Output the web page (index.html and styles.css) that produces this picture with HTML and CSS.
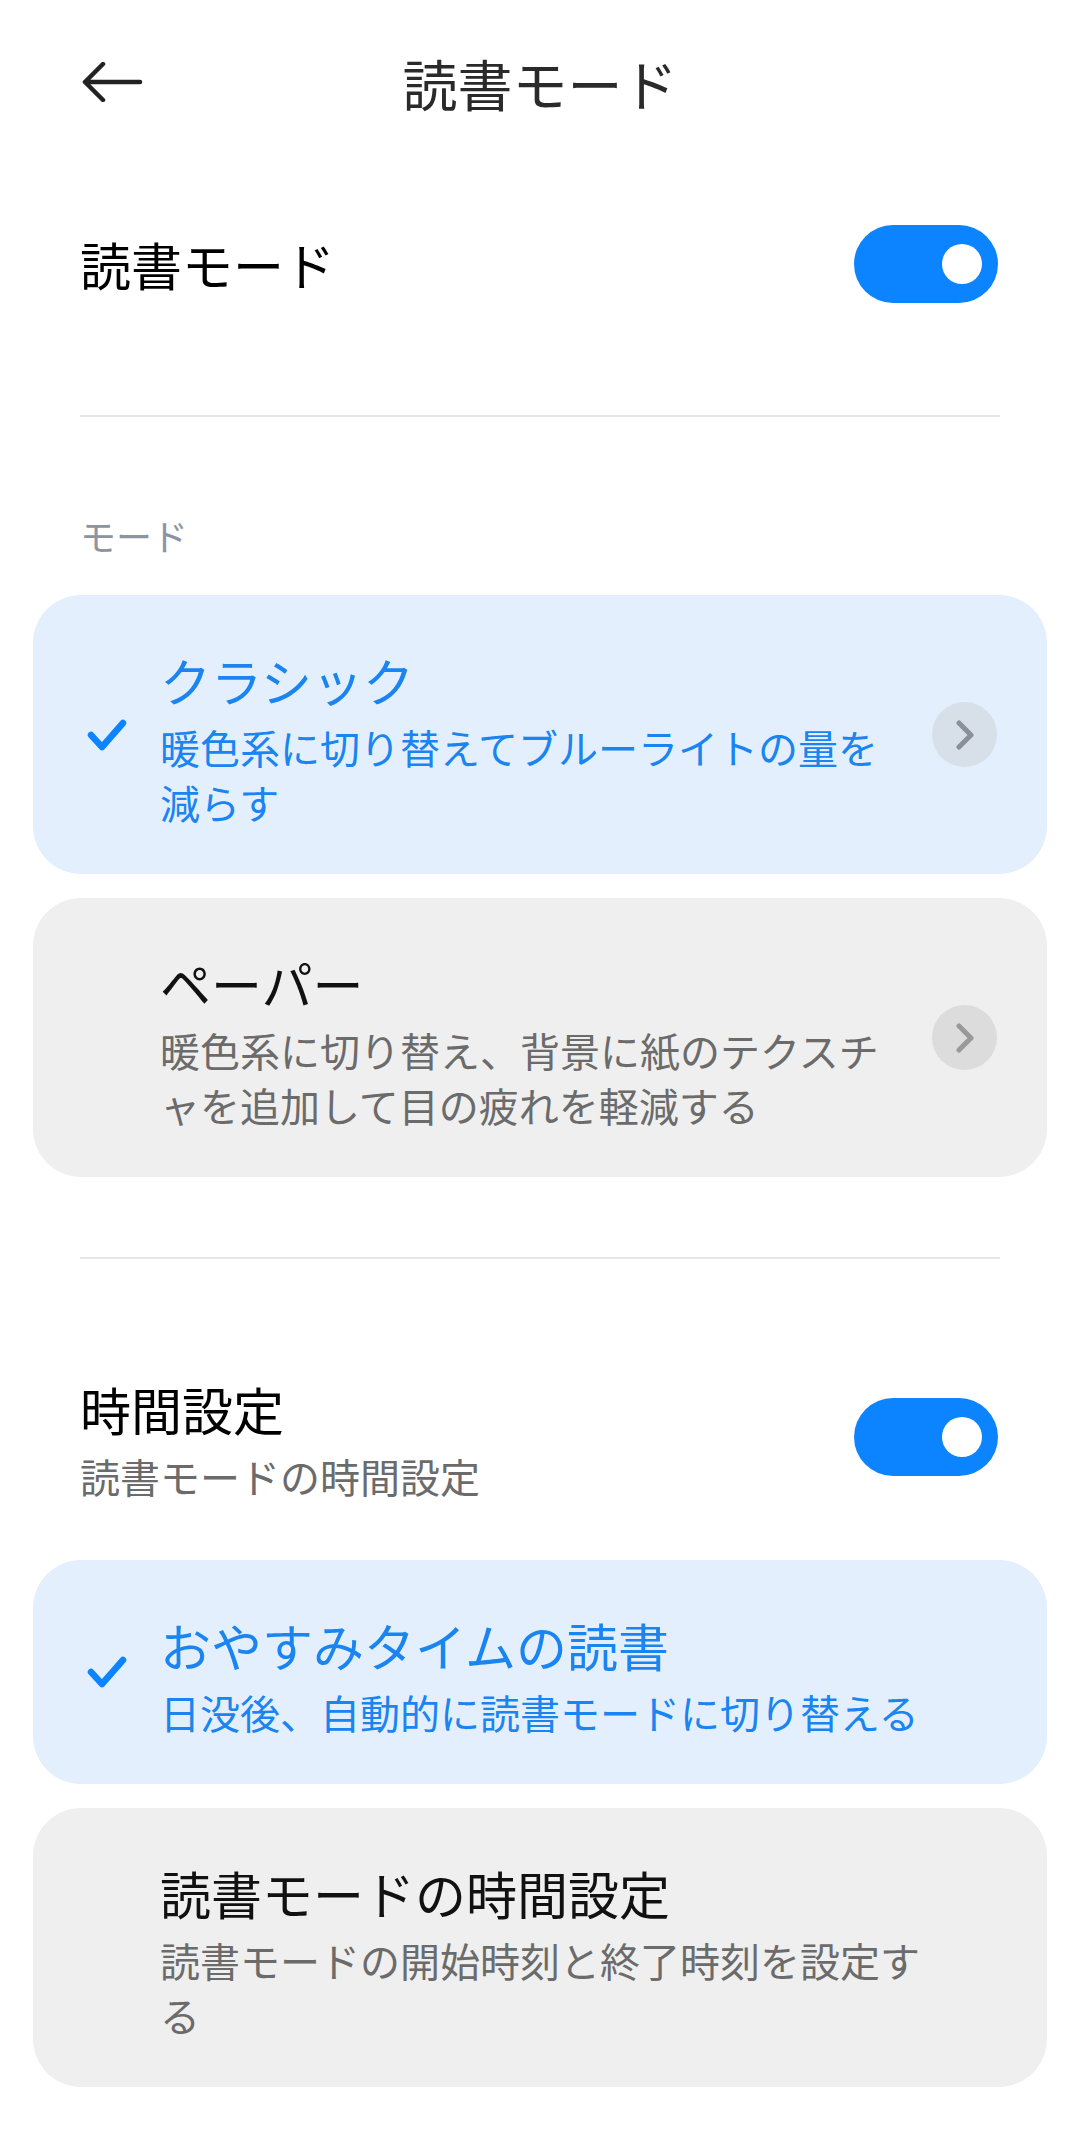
FILE: index.html
```html
<!DOCTYPE html>
<html lang="ja">
<head>
    <meta charset="UTF-8">
    <meta name="viewport" content="width=device-width, initial-scale=1.0">
    <title>読書モード</title>
    <link rel="stylesheet" href="styles.css">
</head>
<body>
    <header class="topbar">
        <svg class="back" viewBox="0 0 64 40" width="64" height="40">
            <path d="M5 20 H60 M23 2 L5 20 L23 38" fill="none" stroke="#222" stroke-width="4.5" stroke-linecap="round" stroke-linejoin="round"/>
        </svg>
        <h1>読書モード</h1>
        <span></span>
    </header>

    <main>
        <div class="switch-row">
            <div class="row-title">読書モード</div>
            <div class="switch"></div>
        </div>

        <div class="divider"></div>

        <div class="section-label">モード</div>

        <div class="cards">
            <div class="card active">
                <svg class="mark" viewBox="0 0 40 34" width="40" height="34">
                    <path d="M4 17 L15 29 L36 5" fill="none" stroke="#0d84ff" stroke-width="6.5" stroke-linecap="round" stroke-linejoin="round"/>
                </svg>
                <div class="card-text">
                    <div class="card-title">クラシック</div>
                    <div class="card-desc">暖色系に切り替えてブルーライトの量を<br>減らす</div>
                </div>
                <div class="more">
                    <svg viewBox="0 0 20 30" width="20" height="30">
                        <path d="M4 3 L16 15 L4 27" fill="none" stroke="#8b9098" stroke-width="5" stroke-linecap="round" stroke-linejoin="round"/>
                    </svg>
                </div>
            </div>
            <div class="card">
                <span class="mark"></span>
                <div class="card-text">
                    <div class="card-title">ペーパー</div>
                    <div class="card-desc">暖色系に切り替え、背景に紙のテクスチ<br>ャを追加して目の疲れを軽減する</div>
                </div>
                <div class="more">
                    <svg viewBox="0 0 20 30" width="20" height="30">
                        <path d="M4 3 L16 15 L4 27" fill="none" stroke="#999" stroke-width="5" stroke-linecap="round" stroke-linejoin="round"/>
                    </svg>
                </div>
            </div>
        </div>

        <div class="divider divider-low"></div>

        <div class="switch-row time-row">
            <div>
                <div class="row-title">時間設定</div>
                <div class="row-sub">読書モードの時間設定</div>
            </div>
            <div class="switch"></div>
        </div>

        <div class="cards time-cards">
            <div class="card active">
                <svg class="mark" viewBox="0 0 40 34" width="40" height="34">
                    <path d="M4 17 L15 29 L36 5" fill="none" stroke="#0d84ff" stroke-width="6.5" stroke-linecap="round" stroke-linejoin="round"/>
                </svg>
                <div class="card-text">
                    <div class="card-title">おやすみタイムの読書</div>
                    <div class="card-desc">日没後、自動的に読書モードに切り替える</div>
                </div>
            </div>
            <div class="card">
                <span class="mark"></span>
                <div class="card-text">
                    <div class="card-title">読書モードの時間設定</div>
                    <div class="card-desc">読書モードの開始時刻と終了時刻を設定す<br>る</div>
                </div>
            </div>
        </div>
    </main>
</body>
</html>
```

FILE: styles.css
```css
body {
    margin: 0;
    font-family: "Noto Sans CJK JP", "Noto Sans", sans-serif;
    background: #fff;
    color: #000;
}
.topbar {
    height: 164px;
    display: grid;
    grid-template-columns: 1fr auto 1fr;
    align-items: center;
    padding: 0 80px;
}
.back {
    display: block;
}
.topbar h1 {
    margin: 0;
    font-size: 55px;
    font-weight: 400;
    line-height: 70px;
    color: #2a2a2a;
}
.switch-row {
    display: flex;
    align-items: center;
    justify-content: space-between;
    height: 200px;
    padding: 0 82px 0 80px;
}
.row-title {
    font-size: 51px;
    line-height: 64px;
}
.row-sub {
    font-size: 40px;
    line-height: 55px;
    margin-top: 8px;
    color: #6b6b6b;
}
.switch {
    position: relative;
    width: 144px;
    height: 78px;
    border-radius: 39px;
    background: #0d84ff;
    flex: none;
}
.switch::after {
    content: "";
    position: absolute;
    top: 19px;
    right: 16px;
    width: 40px;
    height: 40px;
    border-radius: 50%;
    background: #fff;
}
.divider {
    height: 2px;
    background: #e6e6e6;
    margin: 51px 80px 0;
}
.divider-low {
    margin-top: 80px;
}
.section-label {
    font-size: 36px;
    line-height: 48px;
    color: #8e93a3;
    margin: 94px 80px 36px;
}
.cards {
    display: flex;
    flex-direction: column;
    gap: 24px;
    padding: 0 33px;
}
.card {
    display: flex;
    align-items: center;
    padding: 0 50px 0 54px;
    border-radius: 48px;
    background: #efefef;
}
.card.active {
    background: #e3effd;
}
.mark {
    display: block;
    flex: none;
    width: 40px;
    height: 34px;
    margin-right: 33px;
}
.card-text {
    flex: 1;
    padding: 53px 0 44px;
}
.card-title {
    font-size: 51px;
    line-height: 64px;
    color: #111;
}
.card-desc {
    font-size: 40px;
    line-height: 55px;
    margin-top: 8px;
    color: #6b6b6b;
}
.active .card-title,
.active .card-desc {
    color: #1a84f0;
}
.more {
    flex: none;
    display: flex;
    align-items: center;
    justify-content: center;
    width: 65px;
    height: 65px;
    margin-left: 24px;
    border-radius: 50%;
    background: #dcdcdc;
}
.active .more {
    background: #d7dfe9;
}
.time-row {
    height: auto;
    padding-top: 118px;
}
.time-row .switch {
    margin-bottom: 7px;
}
.time-cards {
    margin-top: 56px;
}
```
